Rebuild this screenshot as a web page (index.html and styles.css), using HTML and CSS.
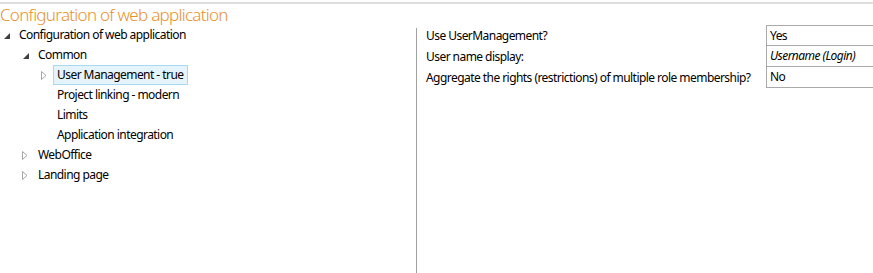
FILE: index.html
```html
<!DOCTYPE html>
<html>
<head>
<meta charset="utf-8">
<link rel="stylesheet" href="styles.css">
</head>
<body>
<div class="page">
  <div class="header">Configuration of web application</div>
  <div class="main">
    <div class="tree">
      <div class="row l0"><span class="exp exp-open"></span><span class="lbl">Configuration of web application</span></div>
      <div class="row l1"><span class="exp exp-open"></span><span class="lbl">Common</span></div>
      <div class="row l2"><span class="exp exp-closed"><svg width="6" height="9" viewBox="0 0 6 9"><path d="M0.5 0.5 L5 4.5 L0.5 8.5 Z" fill="none" stroke="#a6a6a6" stroke-width="1"/></svg></span><span class="lbl selected">User Management - true</span></div>
      <div class="row l2"><span class="exp"></span><span class="lbl">Project linking - modern</span></div>
      <div class="row l2"><span class="exp"></span><span class="lbl">Limits</span></div>
      <div class="row l2"><span class="exp"></span><span class="lbl">Application integration</span></div>
      <div class="row l1"><span class="exp exp-closed"><svg width="6" height="9" viewBox="0 0 6 9"><path d="M0.5 0.5 L5 4.5 L0.5 8.5 Z" fill="none" stroke="#a6a6a6" stroke-width="1"/></svg></span><span class="lbl">WebOffice</span></div>
      <div class="row l1"><span class="exp exp-closed"><svg width="6" height="9" viewBox="0 0 6 9"><path d="M0.5 0.5 L5 4.5 L0.5 8.5 Z" fill="none" stroke="#a6a6a6" stroke-width="1"/></svg></span><span class="lbl">Landing page</span></div>
    </div>
    <div class="divider"></div>
    <div class="props">
      <div class="prop"><div class="plabel">Use UserManagement?</div><div class="pval first">Yes</div></div>
      <div class="prop"><div class="plabel">User name display:</div><div class="pval italic">Username (Login)</div></div>
      <div class="prop"><div class="plabel">Aggregate the rights (restrictions) of multiple role membership?</div><div class="pval">No</div></div>
    </div>
  </div>
</div>
</body>
</html>
```
FILE: styles.css
```css
html, body {
  margin: 0;
  padding: 0;
  background: #ffffff;
}
body {
  width: 873px;
  height: 273px;
  overflow: hidden;
  font-family: "Segoe UI", "Noto Sans", "Open Sans", sans-serif;
  font-size: 12px;
  letter-spacing: -0.55px;
  color: #000;
}
.page {
  display: flex;
  flex-direction: column;
  height: 273px;
  padding-top: 2px;
  box-sizing: border-box;
}
.header {
  border-top: 2px solid #dedede;
  color: #e8912b;
  font-size: 17px;
  font-weight: 300;
  letter-spacing: -0.72px;
  line-height: 22px;
  height: 21px;
}
.main {
  display: flex;
  flex: 1;
}
.tree {
  width: 416px;
  flex: none;
}
.row {
  display: flex;
  align-items: center;
  height: 20px;
}
.l0 { padding-left: 4px; }
.l1 { padding-left: 23px; }
.l2 { padding-left: 41px; }
.exp {
  width: 14px;
  height: 20px;
  flex: none;
  display: flex;
  align-items: center;
}
.l2 .exp { width: 15px; }
.exp-open::before {
  content: "";
  display: block;
  width: 0;
  height: 0;
  border-left: 6px solid transparent;
  border-bottom: 6px solid #404040;
  margin-top: 1px;
}
.exp-closed svg { display: block; margin-top: 1px; }
.l1 .exp-closed svg { margin-left: -1px; }
.lbl {
  line-height: 18px;
  padding: 0 3px;
  margin-left: -3px;
  border: 1px solid transparent;
  white-space: nowrap;
}
.lbl.selected {
  background: #e5f3fb;
  border-color: #a8d8f2;
}
.divider {
  width: 1px;
  background: #a0a0a0;
  margin-top: 3px;
  flex: none;
}
.props {
  flex: none;
  width: 480px;
  display: flex;
  flex-direction: column;
  padding-left: 9px;
}
.prop {
  display: flex;
  height: 21px;
}
.plabel {
  width: 340px;
  flex: none;
  line-height: 21px;
  white-space: nowrap;
}
.pval {
  width: 120px;
  flex: none;
  border: 1px solid #a9a9a9;
  border-top: none;
  padding-left: 3px;
  line-height: 20px;
  white-space: nowrap;
}
.pval.first {
  border-top: 1px solid #a9a9a9;
  line-height: 19px;
}
.italic { font-style: italic; }
```
